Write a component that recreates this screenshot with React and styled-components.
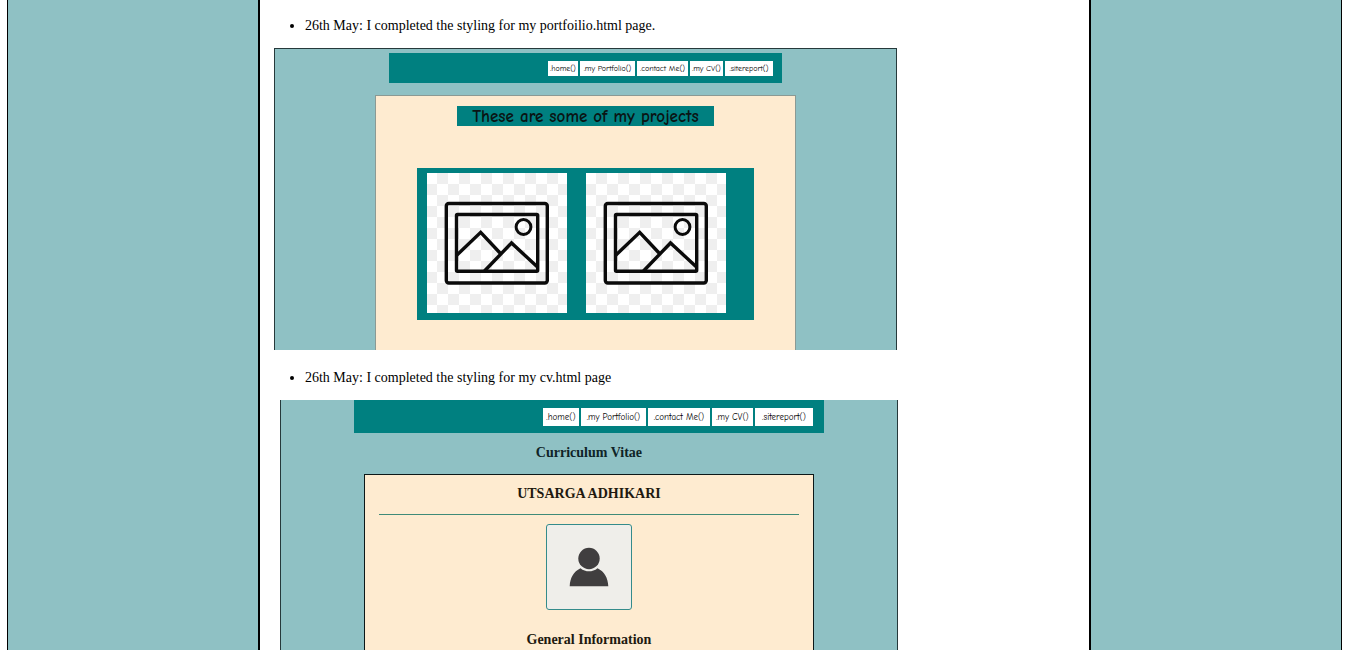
import React from "react";
import styled, { createGlobalStyle } from "styled-components";

const mist = "#8fc1c4";
const cream = "#feebd0";

const GlobalStyle = createGlobalStyle`
  *, *::before, *::after { box-sizing: border-box; }
  body {
    margin: 0;
    background: #fff;
    color: #000;
    font-family: "Liberation Serif", "Times New Roman", serif;
  }
`;

const Page = styled.div`
  display: grid;
  grid-template-columns: 3fr 10fr 3fr;
  min-height: 100vh;
  margin: 0 4px 0 7px;
  border: solid #000;
  border-width: 0 1px;
  background: ${mist};
`;

const Report = styled.main`
  grid-column: 2;
  padding: 16px 14px 0;
  border: solid #000;
  border-width: 0 2px;
  background: #fff;
`;

const Log = styled.ul`
  margin: 0;
  padding: 0 0 0 31px;
  font-size: 14px;
  line-height: 20px;
`;

const Shot = styled.figure`
  margin: ${(p) => p.$margin};
  width: ${(p) => p.$width};
  border: solid #26393b;
  border-width: ${(p) => (p.$framed ? "1px 1px 0" : "0 1px")};
  background: ${mist};
`;

const Nav = styled.nav`
  display: flex;
  justify-content: flex-end;
  gap: 2px;
  margin: ${(p) => p.$margin};
  padding: ${(p) => p.$padding};
  background: #008080;
`;

const NavLink = styled.a`
  flex: 0 0 ${(p) => p.$basis}px;
  padding-top: 1px;
  background: #fff;
  color: #000;
  font-family: "Comic Sans MS", "Comic Neue", "Open Sans", sans-serif;
  font-size: ${(p) => p.$size}px;
  line-height: ${(p) => p.$line}px;
  text-align: center;
  text-decoration: none;
  white-space: nowrap;
`;

const Projects = styled.section`
  display: flex;
  flex-direction: column;
  align-items: center;
  margin: 12px 100px 0;
  padding: 10px 0 30px;
  border: solid #8b9a94;
  border-width: 1px 1px 0;
  background: ${cream};
`;

const ProjectsTitle = styled.h2`
  margin: 0 0 42px;
  padding: 1px 14px 0;
  background: #008080;
  color: #0a1414;
  font-family: "Comic Sans MS", "Comic Neue", "Open Sans", sans-serif;
  font-size: 17px;
  font-weight: 700;
  line-height: 19px;
  width: 257px;
  text-align: center;
  white-space: nowrap;
`;

const Gallery = styled.div`
  display: flex;
  gap: 19px;
  width: 337px;
  padding: 5px 0 7px 10px;
  background: #008080;
`;

const Tile = styled.svg`
  display: block;
  flex: none;
  width: 140px;
  height: 140px;
  background: #fff;
`;

const Heading = styled.h3`
  margin: ${(p) => p.$margin || "0"};
  color: ${(p) => p.$color || "#21190f"};
  font-size: 14px;
  font-weight: 700;
  line-height: 20px;
  text-align: center;
`;

const Resume = styled.section`
  margin: 0 83px;
  padding: 9px 14px 0;
  border: solid #0c1818;
  border-width: 1px 1px 0;
  background: ${cream};
`;

const Rule = styled.hr`
  margin: 10px 0 9px;
  border: 0;
  border-top: 1px solid #3f8a78;
`;

const Avatar = styled.svg`
  display: block;
  width: 86px;
  height: 86px;
  margin: 0 auto 20px;
  border: 1px solid #348b8b;
  border-radius: 3px;
  background: #efeeea;
`;

const links = [
  { label: ".home()", small: 30, large: 36 },
  { label: ".my Portfolio()", small: 55, large: 65 },
  { label: ".contact Me()", small: 51, large: 62 },
  { label: ".my CV()", small: 33, large: 41 },
  { label: ".sitereport()", small: 48, large: 58 },
];

function SiteNav({ large, margin, padding }) {
  return (
    <Nav $margin={margin} $padding={padding}>
      {links.map((l) => (
        <NavLink
          key={l.label}
          href="#"
          $basis={large ? l.large : l.small}
          $size={large ? 9 : 8}
          $line={large ? 17 : 14}
        >
          {l.label}
        </NavLink>
      ))}
    </Nav>
  );
}

function Picture({ id }) {
  return (
    <Tile viewBox="0 0 140 140" role="img" aria-label="Project placeholder">
      <defs>
        <pattern id={id} x="-1" width="22" height="22" patternUnits="userSpaceOnUse">
          <path d="M11 0h11v11H11zM0 11h11v11H0z" fill="#efefef" />
        </pattern>
      </defs>
      <rect width="140" height="140" fill={`url(#${id})`} />
      <g fill="none" stroke="#0b0b0b" strokeWidth="3.4">
        <rect x="19.3" y="30.5" width="101" height="79.5" rx="2.5" />
        <rect x="29.5" y="41.5" width="81.2" height="56.7" rx="1" />
        <circle cx="96.5" cy="54" r="7.4" strokeWidth="3" />
        <path d="M30 82 53.7 59.3 73.5 80.5M57.5 98 84.5 70 110.5 94" />
      </g>
    </Tile>
  );
}

export default function App() {
  return (
    <>
      <GlobalStyle />
      <Page>
        <Report>
          <Log>
            <li>26th May: I completed the styling for my portfoilio.html page.</li>
          </Log>
          <Shot $margin="12px 0 18px" $width="623px" $framed>
            <SiteNav margin="4px 114px 0" padding="8px 9px 7px" />
            <Projects>
              <ProjectsTitle>These are some of my projects</ProjectsTitle>
              <Gallery>
                <Picture id="checks-a" />
                <Picture id="checks-b" />
              </Gallery>
            </Projects>
          </Shot>
          <Log>
            <li>26th May: I completed the styling for my cv.html page</li>
          </Log>
          <Shot $margin="12px 0 0 6px" $width="618px">
            <SiteNav large margin="0 73px" padding="8px 11px 7px" />
            <Heading $margin="10px 0 11px" $color="#0f2427">Curriculum Vitae</Heading>
            <Resume>
              <Heading>UTSARGA ADHIKARI</Heading>
              <Rule />
              <Avatar viewBox="1 1 84 84" role="img" aria-label="Profile">
                <circle cx="43" cy="34.5" r="10.7" fill="#403e3f" />
                <path
                  d="M34.5 44.2C27.5 47.5 24 54 23.7 62.3H62.3C62 54 58.5 47.5 51.5 44.2C46.5 48.4 39.5 48.4 34.5 44.2Z"
                  fill="#403e3f"
                />
              </Avatar>
              <Heading>General Information</Heading>
            </Resume>
          </Shot>
        </Report>
      </Page>
    </>
  );
}
